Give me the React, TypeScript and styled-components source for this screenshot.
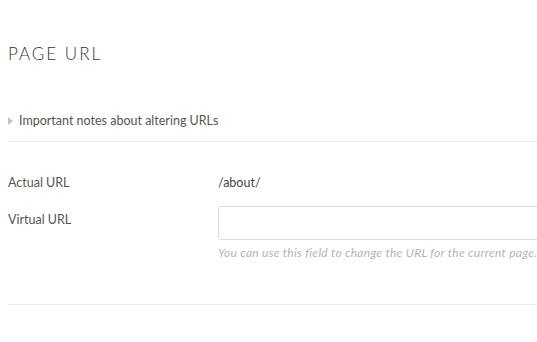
import React from 'react';
import styled, { createGlobalStyle } from 'styled-components';

const GlobalStyle = createGlobalStyle`
  html, body {
    margin: 0;
    padding: 0;
    background: #fff;
    overflow: hidden;
  }
  body {
    font-family: Lato, "Open Sans", "Liberation Sans", sans-serif;
    color: #444;
  }
`;

const Page = styled.div`
  width: 600px;
  padding: 0 0 0 8px;
  box-sizing: border-box;
`;

const Title = styled.h2`
  margin: 0;
  padding-top: 44px;
  font-size: 17px;
  font-weight: 300;
  letter-spacing: 2px;
  color: #333;
  line-height: 20px;
`;

const Notes = styled.div`
  margin-top: 48px;
  padding-bottom: 11px;
  border-bottom: 1px solid #ececec;
  display: flex;
  align-items: center;
  gap: 6px;
  font-size: 12.5px;
  color: #555;
  line-height: 18px;
  cursor: pointer;
`;

const Caret = styled.span`
  width: 0;
  height: 0;
  border-top: 4px solid transparent;
  border-bottom: 4px solid transparent;
  border-left: 5px solid #c4c4c4;
`;

const Form = styled.div`
  padding-top: 32px;
  padding-bottom: 42px;
  border-bottom: 1px solid #ececec;
  display: grid;
  grid-template-columns: 210px 1fr;
  row-gap: 14px;
  font-size: 12.5px;
  line-height: 18px;
`;

const Label = styled.div<{ $offset?: number }>`
  color: #555;
  padding-top: ${(p) => p.$offset ?? 0}px;
`;

const Value = styled.div`
  color: #444;
`;

const Field = styled.div`
  display: flex;
  flex-direction: column;
  gap: 4px;
`;

const TextInput = styled.input`
  box-sizing: border-box;
  width: 100%;
  height: 34px;
  border: 1px solid #dcdcdc;
  border-radius: 3px;
  padding: 0 10px;
  font: inherit;
  outline: none;
`;

const Hint = styled.div`
  font-size: 12px;
  font-style: italic;
  color: #b4b4b4;
  letter-spacing: 0.28px;
`;

export default function App() {
  return (
    <>
      <GlobalStyle />
      <Page>
        <Title>PAGE URL</Title>
        <Notes>
          <Caret />
          Important notes about altering URLs
        </Notes>
        <Form>
          <Label>Actual URL</Label>
          <Value>/about/</Value>
          <Label $offset={5}>Virtual URL</Label>
          <Field>
            <TextInput type="text" />
            <Hint>You can use this field to change the URL for the current page.</Hint>
          </Field>
        </Form>
      </Page>
    </>
  );
}
